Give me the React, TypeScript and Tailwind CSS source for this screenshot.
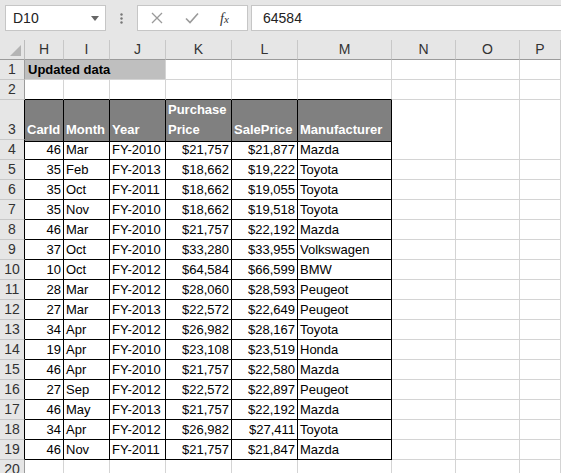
import React from 'react';

const COLS = 'grid grid-cols-[25px_39px_46px_56px_66px_66px_94px_64px_64px_1fr]';
const LETTERS = ['H', 'I', 'J', 'K', 'L', 'M', 'N', 'O', 'P'];

type Row = [number, string, string, string, string, string];

const data: Row[] = [
  [46, 'Mar', 'FY-2010', '$21,757', '$21,877', 'Mazda'],
  [35, 'Feb', 'FY-2013', '$18,662', '$19,222', 'Toyota'],
  [35, 'Oct', 'FY-2011', '$18,662', '$19,055', 'Toyota'],
  [35, 'Nov', 'FY-2010', '$18,662', '$19,518', 'Toyota'],
  [46, 'Mar', 'FY-2010', '$21,757', '$22,192', 'Mazda'],
  [37, 'Oct', 'FY-2010', '$33,280', '$33,955', 'Volkswagen'],
  [10, 'Oct', 'FY-2012', '$64,584', '$66,599', 'BMW'],
  [28, 'Mar', 'FY-2012', '$28,060', '$28,593', 'Peugeot'],
  [27, 'Mar', 'FY-2013', '$22,572', '$22,649', 'Peugeot'],
  [34, 'Apr', 'FY-2012', '$26,982', '$28,167', 'Toyota'],
  [19, 'Apr', 'FY-2010', '$23,108', '$23,519', 'Honda'],
  [46, 'Apr', 'FY-2010', '$21,757', '$22,580', 'Mazda'],
  [27, 'Sep', 'FY-2012', '$22,572', '$22,897', 'Peugeot'],
  [46, 'May', 'FY-2013', '$21,757', '$22,192', 'Mazda'],
  [34, 'Apr', 'FY-2012', '$26,982', '$27,411', 'Toyota'],
  [46, 'Nov', 'FY-2011', '$21,757', '$21,847', 'Mazda'],
];

const headers = ['CarId', 'Month', 'Year', 'Purchase Price', 'SalePrice', 'Manufacturer'];

function RowHead({ n, dark, tall }: { n: number; dark?: boolean; tall?: boolean }) {
  return (
    <div
      className={`bg-[#e6e6e6] border-b border-b-[#c8c8c8] border-r flex items-end justify-center text-[14px] text-[#333] ${
        tall ? 'h-[40px]' : 'h-[20px]'
      } leading-[19px] ${dark ? 'border-r-black' : 'border-r-[#9b9b9b]'}`}
    >
      {n}
    </div>
  );
}

function EmptyCells({ from, row }: { from: number; row: number }) {
  const cells = [];
  for (let c = from; c < 9; c++) {
    const topEdge = row === 2 && c <= 5;
    cells.push(
      <div
        key={c}
        className={`border-r border-r-[#d4d4d4] border-b ${topEdge ? 'border-b-black' : 'border-b-[#d4d4d4]'} bg-white`}
      />
    );
  }
  return <>{cells}</>;
}

export default function App() {
  return (
    <div className="w-[561px] h-[473px] overflow-hidden bg-white font-['Liberation_Sans',Arial,sans-serif] text-black">
      {/* formula bar */}
      <div className="h-[40px] bg-[#e6e6e6] flex items-start pt-[5px] pl-[5px]">
        <div className="w-[101px] h-[26px] bg-white border border-[#c6c6c6] flex items-center justify-between pl-[7px] pr-[6px]">
          <span className="text-[14px] text-[#222]">D10</span>
          <svg width="8" height="5" viewBox="0 0 8 5">
            <path d="M0 0h8L4 5z" fill="#666" />
          </svg>
        </div>
        <div className="w-[31px] h-[26px] flex items-center justify-center">
          <svg width="3" height="11" viewBox="0 0 3 11">
            <circle cx="1.5" cy="1.5" r="1.2" fill="#777" />
            <circle cx="1.5" cy="5.5" r="1.2" fill="#777" />
            <circle cx="1.5" cy="9.5" r="1.2" fill="#777" />
          </svg>
        </div>
        <div className="w-[111px] h-[26px] bg-white border border-[#c6c6c6] flex items-center pl-[13px]">
          <svg width="12" height="12" viewBox="0 0 12 12">
            <path d="M1 1l10 10M11 1L1 11" stroke="#9a9a9a" strokeWidth="1.3" />
          </svg>
          <svg className="ml-[22px]" width="14" height="12" viewBox="0 0 14 12">
            <path d="M1 6.5l4 4L13 1.5" stroke="#9a9a9a" strokeWidth="1.6" fill="none" />
          </svg>
          <span className="ml-[21px] text-[14px] italic font-['Liberation_Serif',serif] text-[#333]">
            f<span className="text-[11px]">x</span>
          </span>
        </div>
        <div className="ml-[3px] flex-1 h-[26px] bg-white border border-[#c6c6c6] border-r-0 flex items-center pl-[11px] text-[14px] text-[#222]">
          64584
        </div>
      </div>

      {/* column headers */}
      <div className={`${COLS} h-[20px] bg-[#e6e6e6]`}>
        <div className="border-r border-r-[#bdbdbd] border-b border-b-[#9b9b9b] relative">
          <svg className="absolute right-[3px] bottom-[3px]" width="11" height="11" viewBox="0 0 11 11">
            <path d="M11 0v11H0z" fill="#b4b4b4" />
          </svg>
        </div>
        {LETTERS.map((l) => (
          <div
            key={l}
            className="border-r border-r-[#c8c8c8] border-b border-b-[#9b9b9b] flex items-end justify-center text-[14px] leading-[19px] text-[#333]"
          >
            {l}
          </div>
        ))}
      </div>

      {/* row 1 */}
      <div className={`${COLS} h-[20px]`}>
        <RowHead n={1} />
        <div className="col-span-3 bg-[#bfbfbf] border-r border-r-[#d4d4d4] border-b border-b-[#d4d4d4] font-bold text-[13px] leading-[19px] pl-[3px] flex items-end">
          Updated data
        </div>
        <EmptyCells from={3} row={1} />
      </div>

      {/* row 2 */}
      <div className={`${COLS} h-[20px]`}>
        <RowHead n={2} />
        <EmptyCells from={0} row={2} />
      </div>

      {/* row 3: table header */}
      <div className={`${COLS} h-[40px]`}>
        <RowHead n={3} dark tall />
        {headers.map((h) => (
          <div
            key={h}
            className="bg-[#808080] border-r border-b border-black text-white font-bold text-[13px] leading-[20px] pl-[2px] pb-[1px] flex items-end"
          >
            {h}
          </div>
        ))}
        <EmptyCells from={6} row={3} />
      </div>

      {/* data rows */}
      {data.map((r, i) => (
        <div key={i} className={`${COLS} h-[20px]`}>
          <RowHead n={i + 4} dark />
          {r.map((v, c) => {
            const right = c === 0 || c === 3 || c === 4;
            return (
              <div
                key={c}
                className={`border-r border-b border-black text-[13px] leading-[19px] flex items-end ${
                  right ? 'justify-end pr-[2px]' : 'pl-[2px]'
                }`}
              >
                {v}
              </div>
            );
          })}
          <EmptyCells from={6} row={i + 4} />
        </div>
      ))}

      {/* row 20 */}
      <div className={`${COLS} h-[20px]`}>
        <RowHead n={20} />
        <EmptyCells from={0} row={20} />
      </div>
    </div>
  );
}
